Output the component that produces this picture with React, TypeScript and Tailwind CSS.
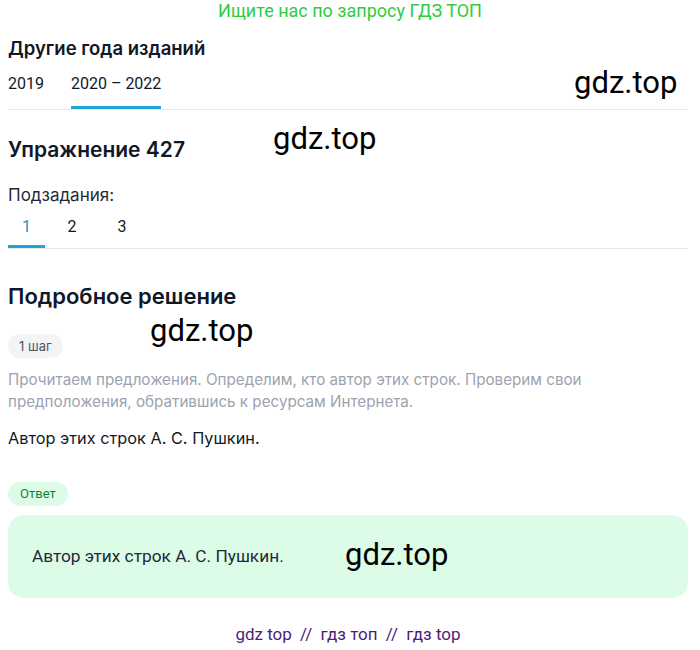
const Watermark = ({ className }: { className: string }) => (
  <span
    className={`absolute text-[31px] leading-none text-black font-['Roboto',sans-serif] ${className}`}
  >
    gdz.top
  </span>
)

export default function App() {
  return (
    <div className="relative h-[650px] w-[700px] overflow-hidden bg-white font-['Inter',sans-serif] text-[#111827]">
      <p className="pt-[1px] text-center text-[18px] leading-[20px] text-[#2ecc40] font-['Roboto',sans-serif]">
        Ищите нас по запросу ГДЗ ТОП
      </p>

      <div className="pl-2 pr-3">
        <h2 className="mt-[15px] text-[18.5px] font-semibold leading-[24px]">Другие года изданий</h2>
        <div className="mt-[12px] flex border-b border-[#e5e7eb] text-[16px] font-['Roboto',sans-serif]">
          <span className="pb-[13px] pr-[27px]">2019</span>
          <span className="border-b-[3px] border-[#1fa5d6] pb-[10px]">2020 – 2022</span>
        </div>

        <h1 className="mt-[26px] text-[21px] font-semibold leading-[28px]">Упражнение 427</h1>
        <p className="mt-[20px] text-[17px] leading-[22px] text-[#1f2937]">Подзадания:</p>
        <div className="mt-[9px] flex border-b border-[#e5e7eb] text-[16px] font-['Roboto',sans-serif]">
          <span className="w-[37px] border-b-[3px] border-[#1fa5d6] pb-[6px] text-center text-[#1f8fc1]">1</span>
          <span className="w-[54px] pb-[9px] text-center">2</span>
          <span className="w-[46px] pb-[9px] text-center">3</span>
        </div>

        <h2 className="mt-[33px] text-[22px] font-semibold leading-[28px]">Подробное решение</h2>
        <span className="mt-[24px] inline-block rounded-full bg-[#f3f4f6] px-[11px] py-[3px] text-[13px] leading-[18px] text-[#4b5563]">
          1 шаг
        </span>
        <p className="mt-[11px] text-[15.2px] leading-[22px] text-[#9ca3af]">
          Прочитаем предложения. Определим, кто автор этих строк. Проверим свои
          <br />
          предположения, обратившись к ресурсам Интернета.
        </p>
        <p className="mt-[14px] text-[16.3px] leading-[22px] text-[#111827]">Автор этих строк А. С. Пушкин.</p>

        <span className="mt-[33px] inline-block rounded-full bg-[#dcfce7] px-[12px] py-[3px] text-[13px] leading-[18px] text-[#15803d] font-['Roboto',sans-serif]">
          Ответ
        </span>
        <div className="mt-[9px] flex h-[83px] items-center rounded-[16px] bg-[#dcfce7] px-6 text-[17.3px] font-['Roboto',sans-serif] text-[#1f2937]">
          Автор этих строк А. С. Пушкин.
        </div>

        <p className="mt-[25px] text-center text-[17px] leading-[22px] text-[#4c1d7a] font-['Roboto',sans-serif]">
          gdz top <span className="mx-[4px]">//</span> гдз топ <span className="mx-[4px]">//</span> гдз top
        </p>
      </div>

      <Watermark className="left-[574px] top-[67px]" />
      <Watermark className="left-[273px] top-[123px]" />
      <Watermark className="left-[150px] top-[315px]" />
      <Watermark className="left-[345px] top-[539px]" />
    </div>
  )
}
